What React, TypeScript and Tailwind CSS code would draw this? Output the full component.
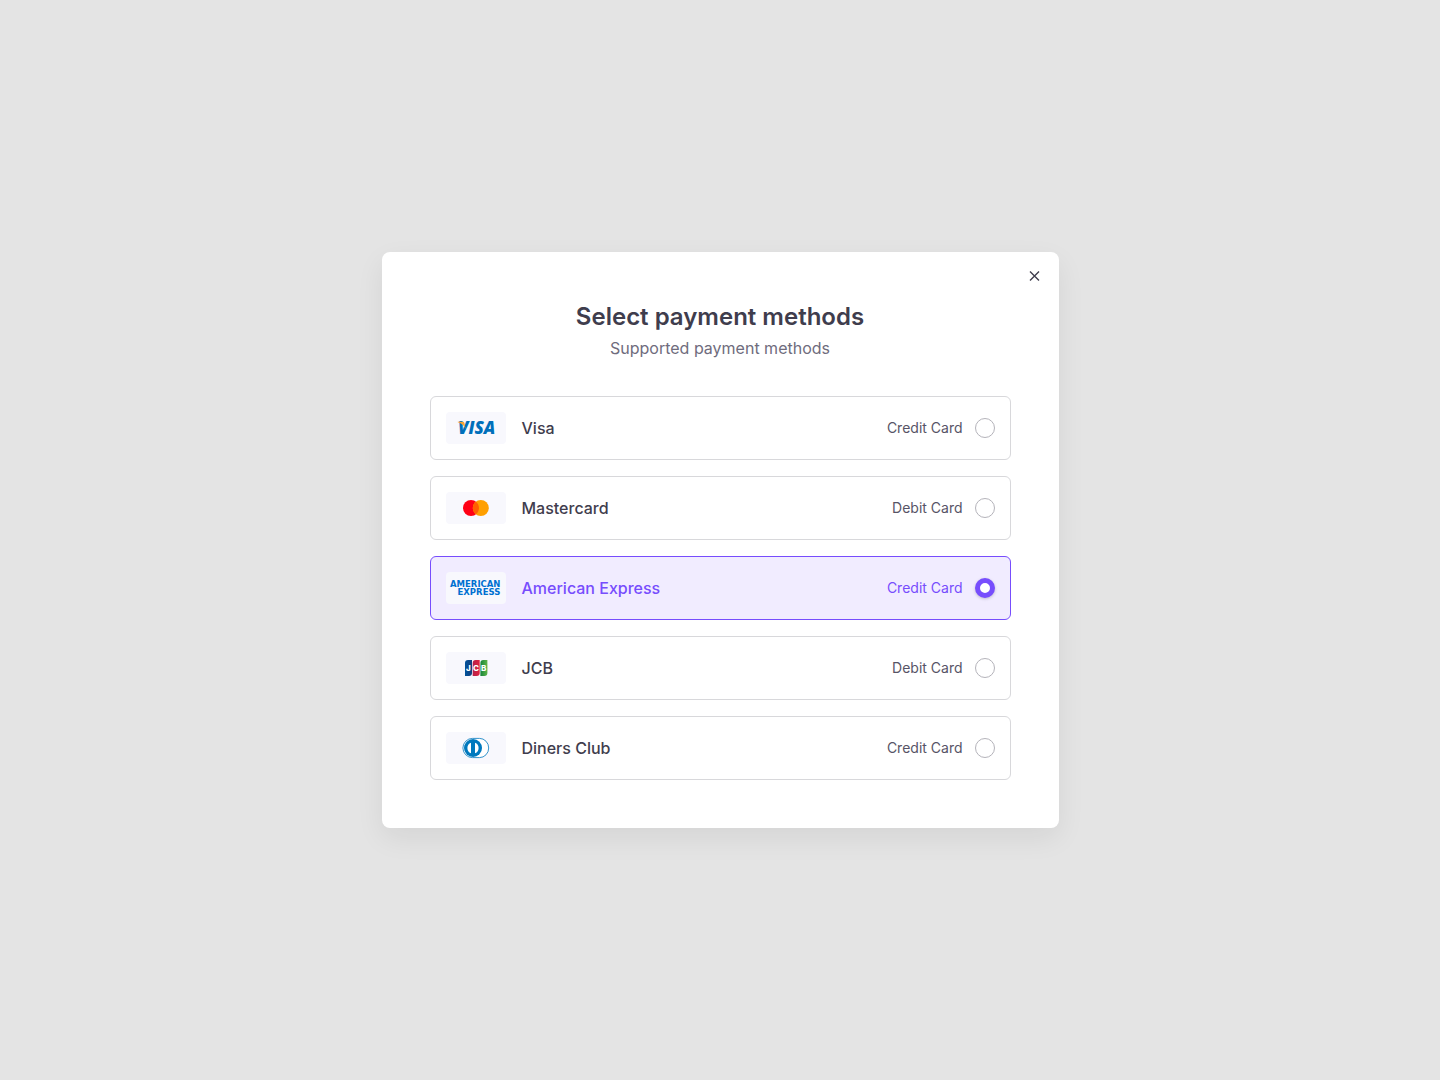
import { useState } from "react";
import type { ReactNode } from "react";

function VisaLogo() {
  return (
    <svg viewBox="0 0 60 32" className="h-8 w-15" aria-hidden="true">
      <text x="12" y="22" fontSize="17" fontWeight="800" fontStyle="italic" fill="#006fba" fontFamily='"Open Sans", sans-serif'>
        VISA
      </text>
      <path d="M11.800 9.800h5c.9 0 1.400.4 1.600 1.200l1.200 6c-1.300-3.400-4-5.800-7.800-6.700Z" fill="#f9a533" />
    </svg>
  );
}

function MastercardLogo() {
  return (
    <svg viewBox="0 0 60 32" className="h-8 w-15" aria-hidden="true">
      <circle cx="25" cy="16" r="8" fill="#ff0015" />
      <circle cx="34.800" cy="16" r="8" fill="#ff9f00" />
      <path d="M29.900 9.700a8 8 0 0 1 0 12.600a8 8 0 0 1 0-12.600Z" fill="#ff5f00" />
    </svg>
  );
}

function AmexLogo() {
  return (
    <svg viewBox="0 0 120 64" className="h-8 w-15" aria-hidden="true">
      <g fill="#0070d1" fontSize="17" fontWeight="700" fontFamily='"DejaVu Sans", sans-serif'>
        <text x="8" y="29">AMERICAN</text>
        <text x="23" y="45">EXPRESS</text>
      </g>
    </svg>
  );
}

function JcbLogo() {
  return (
    <svg viewBox="0 0 60 32" className="h-8 w-15" aria-hidden="true">
      <defs>
        <linearGradient id="jcb-blue">
          <stop stopColor="#00529b" />
          <stop offset="1" stopColor="#143f7c" />
        </linearGradient>
        <linearGradient id="jcb-red">
          <stop stopColor="#b4214a" />
          <stop offset="1" stopColor="#e0213f" />
        </linearGradient>
        <linearGradient id="jcb-green">
          <stop stopColor="#17853b" />
          <stop offset="1" stopColor="#5db447" />
        </linearGradient>
      </defs>
      <path d="M19 11a3 3 0 0 1 3-3h4v13a3 3 0 0 1-3 3h-4Z" fill="url(#jcb-blue)" />
      <path d="M26.700 11a3 3 0 0 1 3-3h4v13a3 3 0 0 1-3 3h-4Z" fill="url(#jcb-red)" />
      <path d="M34.400 11a3 3 0 0 1 3-3h4v13a3 3 0 0 1-3 3h-4Z" fill="url(#jcb-green)" />
      <g fill="#fff" fontSize="8" fontWeight="800" fontFamily='"Inter", sans-serif'>
        <text x="20" y="19">J</text>
        <text x="27" y="19">C</text>
        <text x="35" y="19">B</text>
      </g>
    </svg>
  );
}

function DinersLogo() {
  return (
    <svg viewBox="0 0 60 32" className="h-8 w-15" aria-hidden="true">
      <path
        d="M26.500 6.400h7a9.200 9.600 0 0 1 0 19.200h-7a9.600 9.600 0 0 1 0-19.200Z"
        fill="#fff"
        stroke="#0079be"
        strokeWidth=".8"
      />
      <circle cx="27" cy="16" r="9" fill="#0079be" />
      <path d="M25 10.700a5.700 5.700 0 0 0 0 10.600ZM29 10.700a5.700 5.700 0 0 1 0 10.600Z" fill="#fff" />
    </svg>
  );
}

type Method = { id: string; name: string; kind: string; logo: ReactNode };

const methods: Method[] = [
  { id: "visa", name: "Visa", kind: "Credit Card", logo: <VisaLogo /> },
  { id: "mastercard", name: "Mastercard", kind: "Debit Card", logo: <MastercardLogo /> },
  { id: "amex", name: "American Express", kind: "Credit Card", logo: <AmexLogo /> },
  { id: "jcb", name: "JCB", kind: "Debit Card", logo: <JcbLogo /> },
  { id: "diners", name: "Diners Club", kind: "Credit Card", logo: <DinersLogo /> },
];

export default function App() {
  const [selected, setSelected] = useState("amex");

  return (
    <main className="flex min-h-screen items-center justify-center bg-[#e4e4e4] font-['Inter',sans-serif] text-[#3f3d4d]">
      <section
        role="dialog"
        aria-labelledby="dialog-title"
        className="relative w-full max-w-[677px] rounded-lg bg-white p-12 shadow-[0_10px_28px_rgba(0,0,0,0.07)]"
      >
        <button
          type="button"
          aria-label="Close"
          className="absolute top-3 right-3 flex size-6 cursor-pointer items-center justify-center"
        >
          <svg viewBox="0 0 24 24" className="size-6" fill="none" stroke="#3f3d4d" strokeWidth="1.4" aria-hidden="true">
            <path d="M7 7.500l9 9M16 7.500l-9 9" />
          </svg>
        </button>

        <header className="text-center">
          <h1 id="dialog-title" className="text-2xl leading-[34px] font-semibold">
            Select payment methods
          </h1>
          <p className="mt-0.5 text-base text-[#6f6c7d]">Supported payment methods</p>
        </header>

        <fieldset aria-label="Payment method" className="mt-9 flex flex-col gap-4">
          {methods.map((m) => (
            <label
              key={m.id}
              htmlFor={m.id}
              className="group flex h-16 cursor-pointer items-center rounded-md border border-[#d8d8db] px-[15px] has-checked:border-[#774dfd] has-checked:bg-[#f1ecff] has-checked:text-[#774dfd]"
            >
              <span className="mr-4 rounded-sm bg-[#f8f8fd]">{m.logo}</span>
              <span className="flex-1 text-base font-medium">{m.name}</span>
              <span className="mr-3 text-sm text-[#575466] group-has-checked:text-[#774dfd]">{m.kind}</span>
              <input
                id={m.id}
                type="radio"
                name="payment-method"
                value={m.id}
                checked={selected === m.id}
                onChange={() => setSelected(m.id)}
                className="size-5 cursor-pointer appearance-none rounded-full border border-[#b4b3ba] bg-white checked:border-[5px] checked:border-[#774dfd] checked:shadow-[0_1px_3px_rgba(75,70,92,0.3)]"
              />
            </label>
          ))}
        </fieldset>
      </section>
    </main>
  );
}
